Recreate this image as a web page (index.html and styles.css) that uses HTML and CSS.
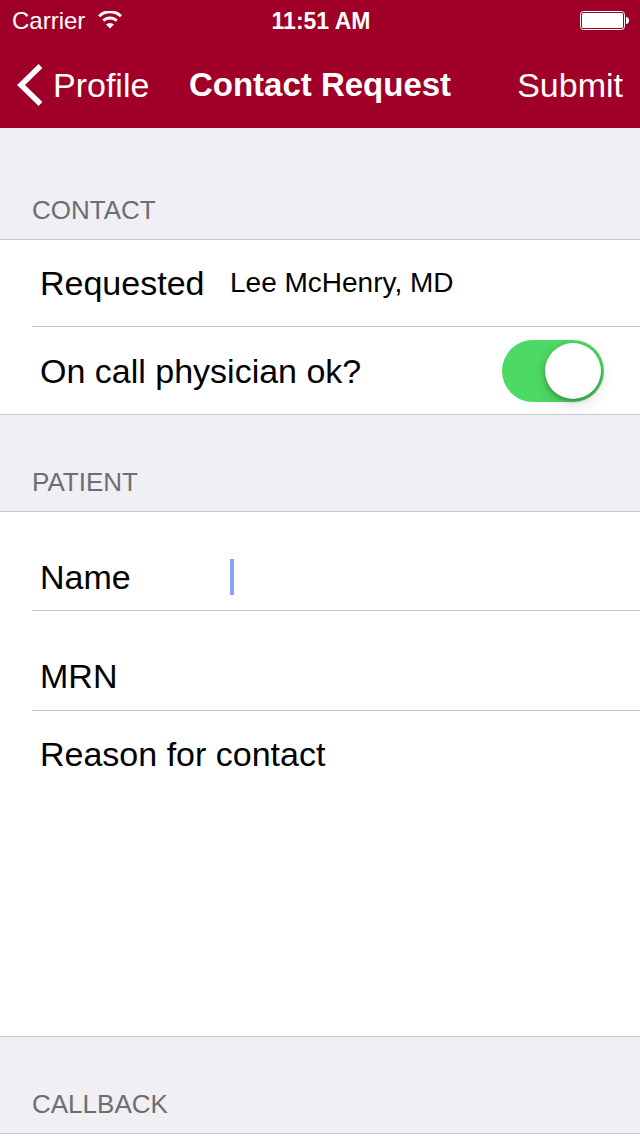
FILE: index.html
```html
<!DOCTYPE html>
<html lang="en">
<head>
<meta charset="utf-8">
<meta name="viewport" content="width=device-width, initial-scale=1">
<title>Contact Request</title>
<link rel="stylesheet" href="styles.css">
</head>
<body>
<header class="top">
  <div class="status">
    <div class="carrier">
      <span>Carrier</span>
      <svg class="wifi" viewBox="0 0 24 18" width="24" height="18" aria-hidden="true">
        <path d="M1.1 5.200A15.5 15.5 0 0 1 22.900 5.200" fill="none" stroke="#fff" stroke-width="3"/>
        <path d="M5.300 9.700A9.600 9.600 0 0 1 18.700 9.700" fill="none" stroke="#fff" stroke-width="2.800"/>
        <path d="M12 17.600L8 13.600A5.700 5.700 0 0 1 16 13.600Z" fill="#fff"/>
      </svg>
    </div>
    <span class="time">11:51 AM</span>
    <svg class="battery" viewBox="0 0 50 20" width="50" height="20" role="img" aria-label="Battery full">
      <rect x="0.500" y="0.500" width="44" height="18" rx="3" fill="none" stroke="#fff"/>
      <rect x="2" y="2" width="41" height="15" rx="1.500" fill="#fff"/>
      <path d="M46 6C48 6 49 7.500 49 9.500S48 13 46 13Z" fill="#fff"/>
    </svg>
  </div>
  <nav class="navbar">
    <a class="back" href="#profile">
      <svg viewBox="0 0 26 42" width="26" height="42" aria-hidden="true">
        <path d="M23.500 2L4 21L23.500 40" fill="none" stroke="#fff" stroke-width="5.500"/>
      </svg>
      <span>Profile</span>
    </a>
    <h1 class="title">Contact Request</h1>
    <button class="submit" type="submit" form="request">Submit</button>
  </nav>
</header>
<form class="form" id="request">
  <h2 class="heading heading-first">CONTACT</h2>
  <section class="group">
    <div class="row row-short">
      <span class="label">Requested</span>
      <span class="value">Lee McHenry, MD</span>
    </div>
    <div class="row row-short">
      <label class="question" for="oncall">On call physician ok?</label>
      <input class="switch" id="oncall" type="checkbox" role="switch" checked>
    </div>
  </section>
  <h2 class="heading">PATIENT</h2>
  <section class="group">
    <div class="row row-field">
      <label class="label" for="name">Name</label>
      <div class="entry"><input class="field" id="name" type="text"><span class="caret"></span></div>
    </div>
    <div class="row row-field">
      <label class="label" for="mrn">MRN</label>
      <div class="entry"><input class="field" id="mrn" type="text"></div>
    </div>
    <div class="row row-reason">
      <label class="question" for="reason">Reason for contact</label>
      <textarea class="reason" id="reason"></textarea>
    </div>
  </section>
  <h2 class="heading">CALLBACK</h2>
</form>
</body>
</html>
```
FILE: styles.css
```css
* {
  box-sizing: border-box;
}

body {
  margin: 0;
  background: #fff;
  color: #000;
  font-family: "Liberation Sans", Arial, sans-serif;
  font-size: 34px;
  line-height: 40px;
}

.top {
  background: #a00028;
  color: #fff;
}

.status {
  display: grid;
  grid-template-columns: 1fr auto 1fr;
  align-items: center;
  height: 42px;
  padding: 0 10px 0 12px;
  font-size: 24px;
}

.carrier {
  display: flex;
  align-items: center;
  gap: 13px;
}

.time {
  font-weight: bold;
  font-size: 23px;
}

.wifi {
  margin-bottom: 2px;
}

.battery {
  justify-self: end;
}

.navbar {
  display: grid;
  grid-template-columns: 1fr auto 1fr;
  align-items: center;
  height: 86px;
  padding: 0 17px;
}

.back {
  display: flex;
  align-items: center;
  gap: 10px;
  color: inherit;
  text-decoration: none;
}

.title {
  margin: 0;
  font-size: 33px;
}

.submit {
  justify-self: end;
  padding: 0;
  border: 0;
  background: none;
  color: inherit;
  font: inherit;
}

.form {
  margin: 0;
}

.heading {
  margin: 0;
  padding: 52px 32px 14px;
  border-bottom: 1px solid #c8c7cc;
  background: #efeff4;
  color: #6d6d72;
  font-size: 26px;
  font-weight: normal;
  line-height: 30px;
}

.heading-first {
  padding-top: 67px;
}

.group {
  padding-left: 32px;
  border-bottom: 1px solid #c8c7cc;
}

.row {
  display: flex;
  align-items: center;
  padding: 0 36px 0 8px;
}

.row + .row {
  border-top: 1px solid #c8c7cc;
}

.row-short {
  min-height: 86px;
}

.row-short + .row-short {
  min-height: 88px;
}

.row-field {
  min-height: 98px;
  padding-top: 31px;
}

.row-field + .row-field {
  min-height: 100px;
}

.row-reason {
  flex-direction: column;
  align-items: stretch;
  padding-top: 23px;
}

.label {
  flex: 0 0 190px;
}

.value {
  font-size: 28px;
}

.question {
  flex: 1;
}

.switch {
  flex: none;
  display: flex;
  justify-content: flex-end;
  width: 102px;
  height: 62px;
  margin: 0;
  padding: 3px;
  border-radius: 31px;
  background: #4cd964;
  appearance: none;
}

.switch::before {
  content: "";
  width: 56px;
  height: 56px;
  border-radius: 50%;
  background: #fff;
  box-shadow: 0 2px 4px rgba(0, 0, 0, 0.3), 0 6px 16px rgba(0, 0, 0, 0.12);
}

.switch:not(:checked) {
  justify-content: flex-start;
  background: #e5e5e5;
}

.entry {
  position: relative;
  flex: 1;
  display: flex;
}

.field,
.reason {
  width: 100%;
  padding: 0;
  border: 0;
  outline: 0;
  background: none;
  font: inherit;
  font-size: 28px;
}

.field {
  height: 36px;
}

.caret {
  position: absolute;
  top: 0;
  left: 0;
  width: 4px;
  height: 36px;
  background: #8aa2f7;
}

.reason {
  height: 262px;
  resize: none;
}
```
